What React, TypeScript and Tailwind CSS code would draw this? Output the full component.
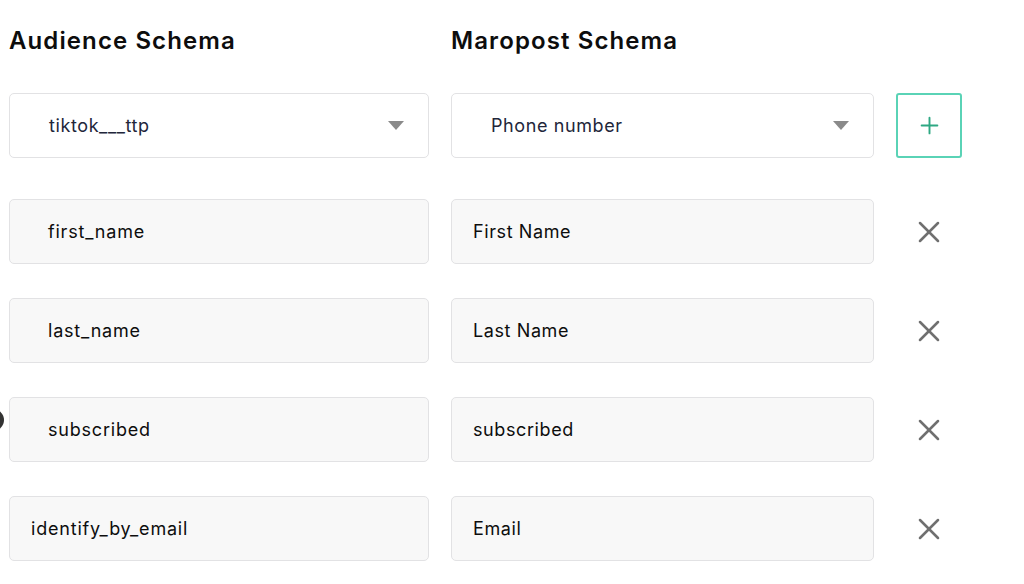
import { X, Plus } from "lucide-react";

const rows = [
  { left: "first_name", right: "First Name", indent: true },
  { left: "last_name", right: "Last Name", indent: true },
  { left: "subscribed", right: "subscribed", indent: true },
  { left: "identify_by_email", right: "Email", indent: false },
];

function Caret() {
  return (
    <svg width="16" height="10" viewBox="0 0 16 10" aria-hidden="true">
      <path d="M0 0 L16 0 L8 9 Z" fill="#8a8a8a" />
    </svg>
  );
}

export default function App() {
  return (
    <div
      className="relative w-[1024px] h-[584px] overflow-hidden bg-white pl-[9px]"
      style={{ fontFamily: "Inter, 'Open Sans', sans-serif" }}
    >
      {/* half-visible dot on the left edge */}
      <div className="absolute left-[-18px] top-[409px] w-[22px] h-[22px] rounded-full bg-[#333]" />

      <div className="grid grid-cols-[420px_423px_66px] gap-x-[22px] pt-[26px]">
        <h2 className="text-[24px] font-semibold text-[#0d0d0d] leading-[30px] tracking-[1.1px]">
          Audience Schema
        </h2>
        <h2 className="text-[24px] font-semibold text-[#0d0d0d] leading-[30px] tracking-[1.1px]">
          Maropost Schema
        </h2>
        <div />

        {/* select row */}
        <div className="mt-[37px] h-[65px] rounded-[5px] border border-[#e2e2e4] bg-white flex items-center pl-[39px] pr-[24px]">
          <span className="flex-1 text-[18px] tracking-[0.6px] text-[#22263a]">tiktok___ttp</span>
          <Caret />
        </div>
        <div className="mt-[37px] h-[65px] rounded-[5px] border border-[#e2e2e4] bg-white flex items-center pl-[39px] pr-[24px]">
          <span className="flex-1 text-[18px] tracking-[0.6px] text-[#22263a]">Phone number</span>
          <Caret />
        </div>
        <div className="mt-[37px] h-[65px] rounded-[3px] border-2 border-[#5ad3b6] flex items-center justify-center">
          <Plus size={27} strokeWidth={1.7} color="#2ea883" />
        </div>

        {rows.map((r, i) => (
          <div key={r.left} className="contents">
            <div
              className={`${i === 0 ? "mt-[41px]" : "mt-[34px]"} h-[65px] rounded-[5px] border border-[#e2e2e4] bg-[#f8f8f8] flex items-center ${r.indent ? "pl-[38px]" : "pl-[21px]"}`}
            >
              <span className="text-[18px] tracking-[0.8px] text-[#0d0d0d]">{r.left}</span>
            </div>
            <div
              className={`${i === 0 ? "mt-[41px]" : "mt-[34px]"} h-[65px] rounded-[5px] border border-[#e2e2e4] bg-[#f8f8f8] flex items-center pl-[21px]`}
            >
              <span className="text-[18px] tracking-[0.6px] text-[#0d0d0d]">{r.right}</span>
            </div>
            <div
              className={`${i === 0 ? "mt-[41px]" : "mt-[34px]"} h-[65px] flex items-center justify-center`}
            >
              <X size={36} strokeWidth={1.7} color="#6f6f6f" />
            </div>
          </div>
        ))}
      </div>
    </div>
  );
}
